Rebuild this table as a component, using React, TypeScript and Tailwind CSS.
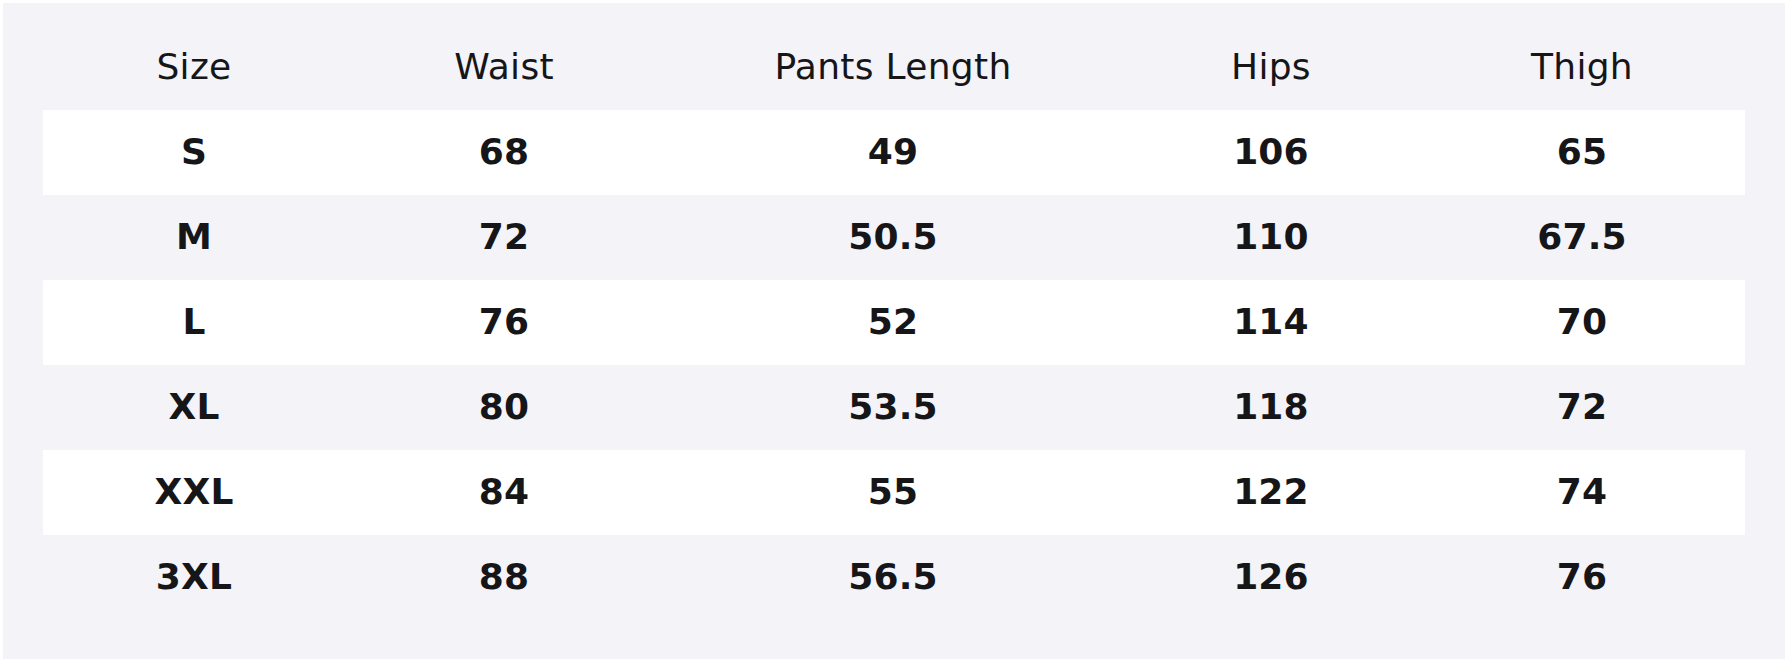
const columns = ["Size", "Waist", "Pants Length", "Hips", "Thigh"];

const rows = [
  ["S", "68", "49", "106", "65"],
  ["M", "72", "50.5", "110", "67.5"],
  ["L", "76", "52", "114", "70"],
  ["XL", "80", "53.5", "118", "72"],
  ["XXL", "84", "55", "122", "74"],
  ["3XL", "88", "56.5", "126", "76"],
];

const grid = "grid grid-cols-[302px_318px_460px_296px_326px]";

export default function App() {
  return (
    <div className="p-[3px] bg-white" style={{ fontFamily: '"DejaVu Sans", sans-serif' }}>
      <div className="bg-[#f3f3f8] px-[40px] pb-[39px] text-[#161618]">
        {/* header */}
        <div className={`${grid} h-[107px] items-center pt-[21px]`}>
          {columns.map((c) => (
            <div key={c} className="text-center text-[36px] tracking-[0.3px] leading-none">
              {c}
            </div>
          ))}
        </div>

        {/* rows */}
        {rows.map((r, i) => (
          <div
            key={r[0]}
            className={`${grid} h-[85px] items-center pb-[1px] ${i % 2 === 0 ? "bg-white" : ""}`}
          >
            {r.map((v, j) => (
              <div key={j} className="text-center text-[36px] tracking-[0.2px] font-bold leading-none">
                {v}
              </div>
            ))}
          </div>
        ))}
      </div>
    </div>
  );
}
